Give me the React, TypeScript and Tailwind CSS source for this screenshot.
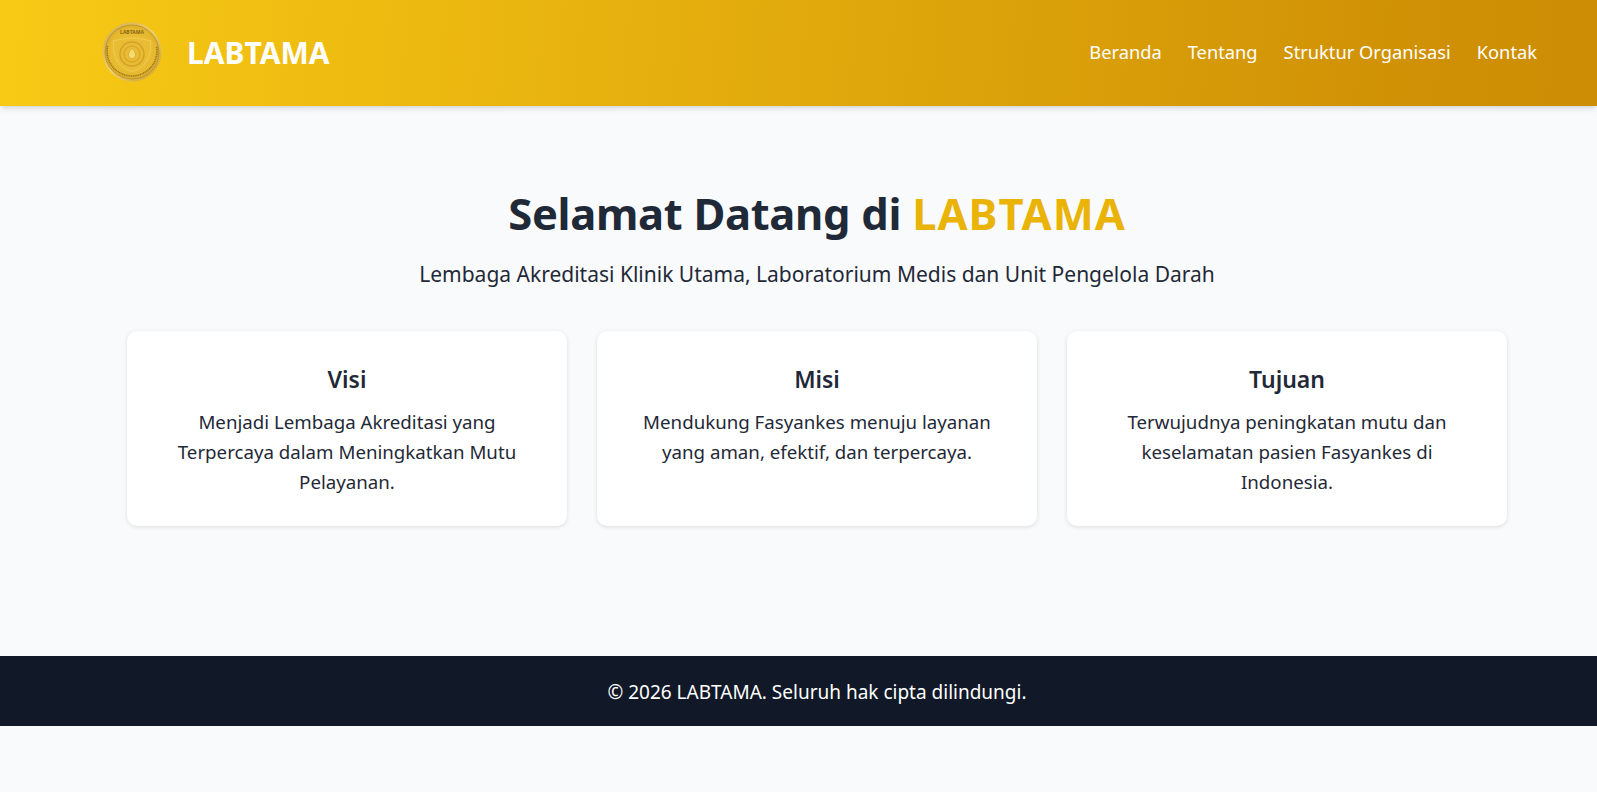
const font = "font-['Noto_Sans','Open_Sans',sans-serif]";

function Logo() {
  return (
    <svg width="60" height="60" viewBox="0 0 60 60" className="shrink-0 mb-[3px]">
      <defs>
        <linearGradient id="rim" x1="0" y1="0" x2="1" y2="1">
          <stop offset="0%" stopColor="#cfa94e" />
          <stop offset="50%" stopColor="#eed072" />
          <stop offset="100%" stopColor="#c79a2a" />
        </linearGradient>
        <radialGradient id="coin" cx="50%" cy="50%" r="60%">
          <stop offset="0%" stopColor="#efc93f" />
          <stop offset="70%" stopColor="#e6b92f" />
          <stop offset="100%" stopColor="#d2a026" />
        </radialGradient>
      </defs>
      <circle cx="30" cy="30" r="29.5" fill="url(#rim)" />
      <circle cx="30" cy="30" r="27" fill="url(#coin)" stroke="#b0851f" strokeWidth="0.7" />
      <path d="M5.5 24 A25 25 0 1 0 54.5 24" fill="none" stroke="#7d5c16" strokeWidth="1.6" strokeDasharray="1.1 0.7" opacity="0.75" />
      <text x="30" y="12" textAnchor="middle" fontSize="5" fontWeight="700" fill="#8a6517" fontFamily="Noto Sans">LABTAMA</text>
      <path d="M11 19 Q30 13.5 49 19 L48 32 Q44 46 30 49.5 Q16 46 12 32 Z" fill="#e9bc34" stroke="#f2d25e" strokeWidth="0.7" />
      <circle cx="30" cy="32" r="12" fill="none" stroke="#d1a028" strokeWidth="1.4" />
      <circle cx="30" cy="32" r="8" fill="none" stroke="#d8a92b" strokeWidth="1.4" />
      <path d="M30 26 Q35 32 33 35 A3.6 3.6 0 0 1 27 35 Q25 32 30 26Z" fill="#f6dc6e" stroke="#cf9f26" strokeWidth="0.6" />
    </svg>
  );
}

const cards = [
  { title: "Visi", text: "Menjadi Lembaga Akreditasi yang Terpercaya dalam Meningkatkan Mutu Pelayanan." },
  { title: "Misi", text: "Mendukung Fasyankes menuju layanan yang aman, efektif, dan terpercaya." },
  { title: "Tujuan", text: "Terwujudnya peningkatan mutu dan keselamatan pasien Fasyankes di Indonesia." },
];

export default function App() {
  return (
    <div className={`${font} min-h-[792px] bg-[#f9fafb] text-[#1f2937]`}>
      <header className="h-[106px] flex items-center justify-between pl-[102px] pr-[60px] bg-[linear-gradient(95deg,#f8ca15,#cf9005_90%,#cd8e05)] shadow-md text-white">
        <div className="flex items-center gap-[25px]">
          <Logo />
          <span className="text-[30px] leading-[40px] font-bold">LABTAMA</span>
        </div>
        <nav className="flex gap-[26px] text-[18.3px] leading-[26px] mb-[2px]">
          <a>Beranda</a>
          <a>Tentang</a>
          <a>Struktur Organisasi</a>
          <a>Kontak</a>
        </nav>
      </header>

      <main className="h-[550px] pl-[127px] pr-[90px] pt-[79px]">
        <h1 className="text-center text-[43.5px] leading-[56px] font-bold tracking-[-0.3px]">
          Selamat Datang di <span className="text-[#eab308] tracking-[1px]">LABTAMA</span>
        </h1>
        <p className="text-center text-[21px] leading-7 mt-[19px]">
          Lembaga Akreditasi Klinik Utama, Laboratorium Medis dan Unit Pengelola Darah
        </p>
        <div className="grid grid-cols-3 gap-[30px] mt-[43px]">
          {cards.map((c) => (
            <div key={c.title} className="h-[195px] bg-white rounded-[10px] shadow-[0_1px_4px_rgba(0,0,0,0.12)] px-[40px] pt-[32px] text-center">
              <h2 className="text-[23px] leading-8 font-semibold">{c.title}</h2>
              <p className="text-[18.7px] leading-[30px] mt-[12px]">{c.text}</p>
            </div>
          ))}
        </div>
      </main>

      <footer className="h-[70px] flex items-center justify-center pl-[37px] pt-[3px] bg-[#111827] text-white text-[19px]">
        © 2026 LABTAMA. Seluruh hak cipta dilindungi.
      </footer>
    </div>
  );
}
